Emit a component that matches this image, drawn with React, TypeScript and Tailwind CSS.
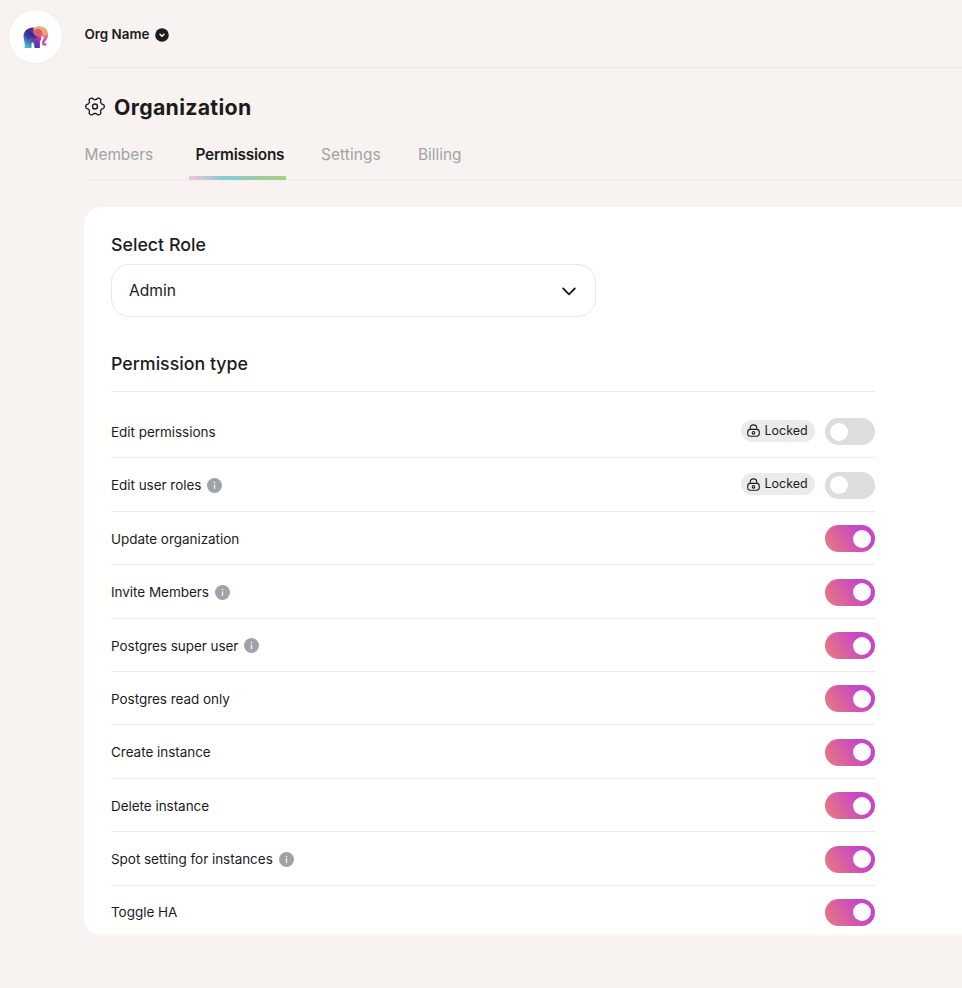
import React from "react";

type Permission = { name: string; info?: boolean; locked?: boolean };

const permissions: Permission[] = [
  { name: "Edit permissions", locked: true },
  { name: "Edit user roles", info: true, locked: true },
  { name: "Update organization" },
  { name: "Invite Members", info: true },
  { name: "Postgres super user", info: true },
  { name: "Postgres read only" },
  { name: "Create instance" },
  { name: "Delete instance" },
  { name: "Spot setting for instances", info: true },
  { name: "Toggle HA" },
];

function ElephantLogo() {
  return (
    <svg width="26" height="24" viewBox="0 0 26 24" fill="none">
      <defs>
        <linearGradient id="body" x1="3" y1="22" x2="15" y2="2" gradientUnits="userSpaceOnUse">
          <stop stopColor="#4cc3c9" />
          <stop offset="0.35" stopColor="#3f5fb0" />
          <stop offset="0.6" stopColor="#432a92" />
          <stop offset="0.8" stopColor="#5a2d95" />
          <stop offset="1" stopColor="#c79ab8" />
        </linearGradient>
        <linearGradient id="head" x1="16" y1="1" x2="22" y2="20" gradientUnits="userSpaceOnUse">
          <stop stopColor="#eeb870" />
          <stop offset="0.5" stopColor="#ea9a78" />
          <stop offset="0.68" stopColor="#d95a9a" />
          <stop offset="1" stopColor="#a92bc4" />
        </linearGradient>
        <linearGradient id="leg" x1="11" y1="23" x2="17" y2="11" gradientUnits="userSpaceOnUse">
          <stop stopColor="#3540a8" />
          <stop offset="0.5" stopColor="#8a28b5" />
          <stop offset="1" stopColor="#d93a9a" />
        </linearGradient>
      </defs>
      <path d="M.5 10.500C1 5.500 5 3 9.500 2.500C14 2.500 18 5 18 11L16.500 16L16.500 23H11.500L10.500 18C9 17 8.500 18 8.500 20V23H1.500C2.500 18 .5 15 .5 10.500Z" fill="url(#body)" />
      <path d="M11 14L17 11L18.500 13L16.800 17V23H11.800C12.200 19 12 17 11 14Z" fill="url(#leg)" />
      <path d="M10.500 5C12 1.800 14.500 .8 17 1.200C22 1.200 25 5 25 9C25.500 12 24 13.500 23.300 15C22 16.500 20.800 17.500 21.500 18.800C22.300 19 22.800 18.300 23.500 18.800C23.800 20.300 22 21 20.500 20.400C18.300 19 19 16 20.500 14C21.300 12.500 20 11 18 11.500C14 12 9.500 10 10.500 5Z" fill="url(#head)" />
      <path d="M11 6C12.500 3.500 17 2.500 19 6C20.300 9 18.500 12 16 12C13 12 10.500 9.500 11 6Z" fill="#e4586f" />
      <path d="M3 11C5 7 9 7 10.500 11C9 10 6 10 5 14" stroke="#2d2f8e" strokeWidth="1.500" />
      <path d="M11.500 4C15 1.800 19.500 3 20.500 7" stroke="#f0ae70" strokeWidth="1.500" />
    </svg>
  );
}

// Outline of a six-lobed cog around (10, 9.5)
const gearPoints = Array.from({ length: 120 }, (_, i) => {
  const a = (i / 120) * Math.PI * 2;
  const r = 8.100 + 1.250 * Math.tanh(1.600 * Math.cos(6 * a));
  return `${(10 + r * Math.cos(a)).toFixed(2)},${(9.500 + r * Math.sin(a)).toFixed(2)}`;
}).join(" ");

function GearIcon() {
  return (
    <svg width="20" height="19" viewBox="0 0 20 19" fill="none" stroke="#1c1c1c" strokeWidth="1.350" strokeLinejoin="round" className="mb-[2px]">
      <polygon points={gearPoints} />
      <circle cx="10" cy="9.500" r="2.500" />
    </svg>
  );
}

function LockIcon() {
  return (
    <svg width="13" height="13" viewBox="0 0 13 13" fill="none" stroke="#1c1c1c" strokeWidth="1.100">
      <path d="M3.200 5.400V4C3.200 2 4.500 .9 6.500 .9S9.800 2 9.800 4V5.400" />
      <path d="M3.400 5.400H9.600C11.600 5.400 12.300 6 12.300 8.200V9.300C12.300 11.500 11.600 12.200 9.600 12.200H3.400C1.400 12.200 .7 11.500 .7 9.300V8.200C.7 6 1.400 5.400 3.400 5.400Z" />
      <circle cx="6.500" cy="8.800" r="1.300" />
    </svg>
  );
}

function InfoIcon() {
  return (
    <svg width="15" height="15" viewBox="0 0 15 15" className="ml-[6px] shrink-0">
      <circle cx="7.500" cy="7.500" r="7.500" fill="#9fa2a8" />
      <circle cx="7.500" cy="4.500" r=".85" fill="#f3f3f4" />
      <path d="M7.500 6.400V11" stroke="#f3f3f4" strokeWidth="1.300" />
    </svg>
  );
}

function Toggle({ on }: { on: boolean }) {
  return on ? (
    <span className="flex h-[27px] w-[50px] shrink-0 items-center justify-end rounded-full bg-[linear-gradient(60deg,#e77980_5%,#c844c8_72%)] pr-[4px]">
      <span className="size-[18px] rounded-full bg-white" />
    </span>
  ) : (
    <span className="flex h-[27px] w-[50px] shrink-0 items-center rounded-full bg-[#dddddd] pl-[5px]">
      <span className="size-[18px] rounded-full bg-white" />
    </span>
  );
}

function PermissionRow({ name, info, locked }: Permission) {
  return (
    <li className="flex h-[53.400px] items-center border-b border-[#ebebeb] pt-[1.500px]">
      <span className="text-[13.500px] leading-5 tracking-[-.04px]">{name}</span>
      {info && <InfoIcon />}
      <span className="ml-auto flex items-center">
        {locked && (
          <span className="mr-[10px] mb-[2px] flex h-[22px] w-[74px] items-center gap-[5px] rounded-full bg-[#ebebeb] pl-[5.500px] text-[12.500px]">
            <LockIcon />
            Locked
          </span>
        )}
        <Toggle on={!locked} />
      </span>
    </li>
  );
}

export default function App() {
  return (
    <div className="flex h-[988px] w-full overflow-hidden bg-[#f8f3f0] font-['Inter',sans-serif] text-[#1c1c1c]">
      <aside className="w-[84px] shrink-0 pt-[10px] pl-[9px]">
        <div className="flex size-[53px] items-center justify-center rounded-full bg-white pl-px shadow-[0_0_3px_rgba(0,0,0,0.05)]">
          <ElephantLogo />
        </div>
      </aside>
      <main className="min-w-0 flex-1">
        <header className="flex h-[67px] items-center gap-[6px] pt-[2px] pl-[.5px]">
          <span className="text-[13.400px] font-semibold">Org Name</span>
          <svg width="14" height="14" viewBox="0 0 14 14">
            <circle cx="7" cy="7" r="6.800" fill="#1c1c1c" />
            <path d="M5 6.200L7 8.200L9 6.200" fill="none" stroke="#fff" strokeWidth="1.500" strokeLinecap="round" strokeLinejoin="round" />
          </svg>
        </header>
        <div className="ml-[4px] h-px bg-[#ece9e8]" />
        <div className="flex h-[78px] items-center gap-[9px] pl-[1px]">
          <GearIcon />
          <h1 className="pt-[2px] text-[21.300px] font-bold tracking-[.3px]">Organization</h1>
        </div>
        <nav className="flex h-[35px] border-b-2 border-[#f1eeee] text-[15.400px] leading-[17px] text-[#a0a3a7]">
          <span className="w-[105px] pl-[.5px]">Members</span>
          <span className="-mb-px w-[97px] border-b-[4px] pl-[6.500px] font-semibold tracking-[-.22px] text-[#1c1c1c] [border-image:linear-gradient(90deg,#f5c5d5,#89cbdd_35%,#97cba8_65%,#a9d477)_1]">Permissions</span>
          <span className="ml-[35px] w-[97px] tracking-[.1px]">Settings</span>
          <span>Billing</span>
        </nav>
        <section className="mt-[26px] h-[729px] overflow-hidden rounded-l-[18px] border-b-2 border-[#fbf9f8] bg-white pt-[25px] pl-[27px]">
          <h2 className="text-[17.800px] leading-[26px] font-medium">Select Role</h2>
          <button className="mt-[6px] flex h-[53px] w-[485px] items-center justify-between rounded-[18px] border border-[#e8e8e8] pr-[19px] pl-[17px] text-[15.600px]">
            <span className="pt-px">Admin</span>
            <svg width="14" height="9" viewBox="0 0 14 9" fill="none" stroke="#1c1c1c" strokeWidth="1.800" strokeLinecap="round" strokeLinejoin="round" className="mt-px">
              <path d="M1.200 1.500L7 7.300L12.800 1.500" />
            </svg>
          </button>
          <h2 className="mt-[34px] text-[17.800px] leading-[26px] font-medium">Permission type</h2>
          <ul className="mt-[14px] w-[764px] border-t border-[#ebebeb] pt-[13px]">
            {permissions.map((p) => (
              <PermissionRow key={p.name} {...p} />
            ))}
          </ul>
        </section>
      </main>
    </div>
  );
}
